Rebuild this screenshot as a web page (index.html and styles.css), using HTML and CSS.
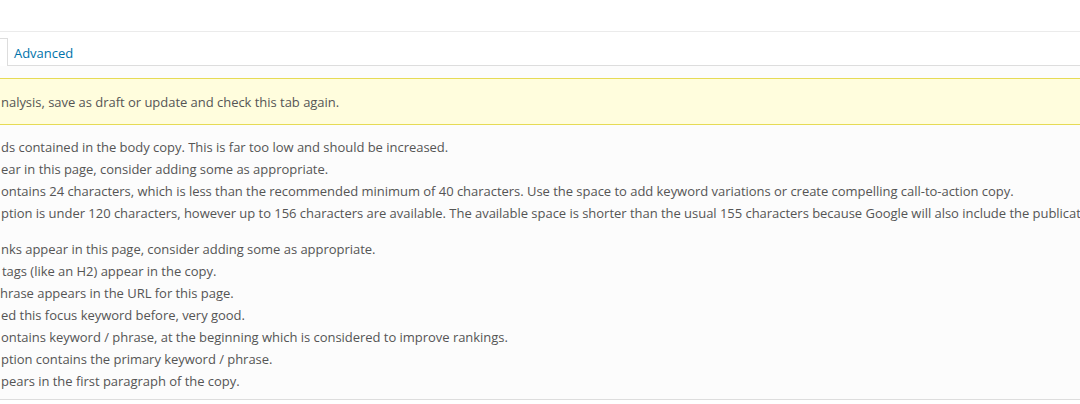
FILE: index.html
```html
<!DOCTYPE html>
<html>
<head>
<meta charset="utf-8">
<link rel="stylesheet" href="styles.css">
</head>
<body>
<div class="page">
  <div class="header"></div>
  <div class="tabs">
    <div class="tab tab-active"></div>
    <div class="tab tab-link">Advanced</div>
  </div>
  <div class="panel">
    <div class="notice">nalysis, save as draft or update and check this tab again.</div>
    <ul class="results">
      <li class="r1">ds contained in the body copy. This is far too low and should be increased.</li>
      <li class="r1">ear in this page, consider adding some as appropriate.</li>
      <li class="r1">ontains 24 characters, which is less than the recommended minimum of 40 characters. Use the space to add keyword variations or create compelling call-to-action copy.</li>
      <li class="r2">ption is under 120 characters, however up to 156 characters are available. The available space is shorter than the usual 155 characters because Google will also include the publication date in the snippet.</li>
    </ul>
    <ul class="results results-good">
      <li class="r1">nks appear in this page, consider adding some as appropriate.</li>
      <li class="r3">tags (like an H2) appear in the copy.</li>
      <li class="r0">hrase appears in the URL for this page.</li>
      <li class="r1">ed this focus keyword before, very good.</li>
      <li class="r1">ontains keyword / phrase, at the beginning which is considered to improve rankings.</li>
      <li class="r2">ption contains the primary keyword / phrase.</li>
      <li class="r2">pears in the first paragraph of the copy.</li>
    </ul>
  </div>
</div>
</body>
</html>
```

FILE: styles.css
```css
html, body {
  margin: 0;
  padding: 0;
  background: #ffffff;
  overflow: hidden;
}

body {
  font-family: "Open Sans", "Noto Sans", sans-serif;
  font-size: 13px;
  letter-spacing: -0.03px;
  color: #555555;
  width: 1080px;
  height: 404px;
}

.page {
  white-space: nowrap;
}

.header {
  height: 31px;
  border-bottom: 1px solid #ebebeb;
}

.tabs {
  display: flex;
  align-items: flex-end;
  height: 33px;
  border-bottom: 1px solid #dddddd;
}

.tab {
  box-sizing: border-box;
}

.tab-active {
  width: 8px;
  height: 28px;
  margin-bottom: -1px;
  background: #ffffff;
  border-top: 1px solid #dddddd;
  border-right: 1px solid #dddddd;
}

.tab-link {
  color: #0073aa;
  padding: 4px 0 0 6px;
  line-height: 22px;
  height: 27px;
}

.panel {
  background: #fcfcfc;
  padding: 12px 0 7px;
  border-bottom: 1px solid #dddddd;
}

.notice {
  background: #fffddd;
  border-top: 1px solid #e6db55;
  border-bottom: 1px solid #e6db55;
  padding: 12px 0 11px 1px;
  line-height: 22px;
}

.results {
  list-style: none;
  margin: 11px 0 0;
  padding: 0;
  line-height: 22px;
}

.results-good {
  margin-top: 14px;
}

.r0 { padding-left: 0; }
.r1 { padding-left: 1px; }
.r2 { padding-left: 1px; }
.r3 { padding-left: 2px; }
```
